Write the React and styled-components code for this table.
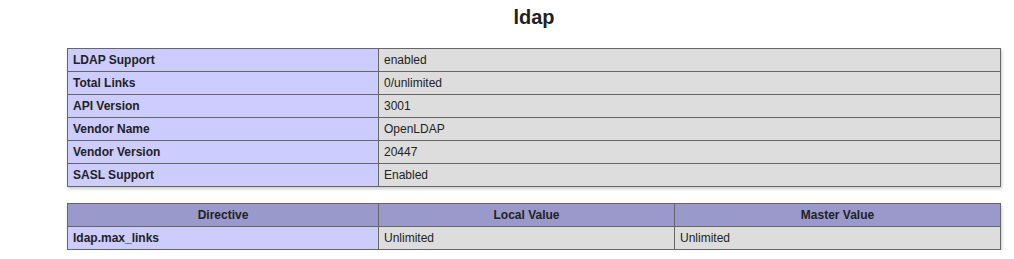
import React from "react";
import styled, { createGlobalStyle } from "styled-components";

const Global = createGlobalStyle`
  html, body { margin: 0; padding: 0; background: #fff; }
  body { color: #222; font-family: "Liberation Sans", Arial, sans-serif; }
`;

const Page = styled.div`
  padding: 6px 0 0 67px;
  width: 934px;
  display: flex;
  flex-direction: column;
`;

const Title = styled.h2`
  margin: 0 0 19px;
  font-size: 20px;
  line-height: 23px;
  font-weight: bold;
  text-align: center;
`;

const Table = styled.table`
  border-collapse: collapse;
  border: 0;
  width: 934px;
  box-shadow: 1px 2px 3px #ccc;
  margin-bottom: ${(p) => p.$gap || 0}px;
  text-align: left;
`;

const Cell = styled.td`
  border: 1px solid #666;
  font-size: 12px;
  line-height: 14px;
  padding: 4px 5px;
  vertical-align: baseline;
  background: ${(p) => (p.$kind === "e" ? "#ccf" : "#ddd")};
  font-weight: ${(p) => (p.$kind === "e" ? "bold" : "normal")};
  width: ${(p) => (p.$kind === "e" ? "300px" : "auto")};
  color: #222;
`;

const Head = styled.th`
  border: 1px solid #666;
  font-size: 12px;
  line-height: 14px;
  padding: 4px 5px;
  background: #99c;
  font-weight: bold;
  text-align: center;
  color: #222;
  width: ${(p) => p.$w || "auto"};
`;

const info = [
  ["LDAP Support", "enabled"],
  ["Total Links", "0/unlimited"],
  ["API Version", "3001"],
  ["Vendor Name", "OpenLDAP"],
  ["Vendor Version", "20447"],
  ["SASL Support", "Enabled"],
];

export default function App() {
  return (
    <>
      <Global />
      <Page>
        <Title>ldap</Title>
        <Table $gap={16}>
          <tbody>
            {info.map(([k, v]) => (
              <tr key={k}>
                <Cell $kind="e">{k}</Cell>
                <Cell $kind="v">{v}</Cell>
              </tr>
            ))}
          </tbody>
        </Table>
        <Table>
          <thead>
            <tr>
              <Head $w="300px">Directive</Head>
              <Head $w="285px">Local Value</Head>
              <Head>Master Value</Head>
            </tr>
          </thead>
          <tbody>
            <tr>
              <Cell $kind="e">ldap.max_links</Cell>
              <Cell $kind="v">Unlimited</Cell>
              <Cell $kind="v">Unlimited</Cell>
            </tr>
          </tbody>
        </Table>
      </Page>
    </>
  );
}
